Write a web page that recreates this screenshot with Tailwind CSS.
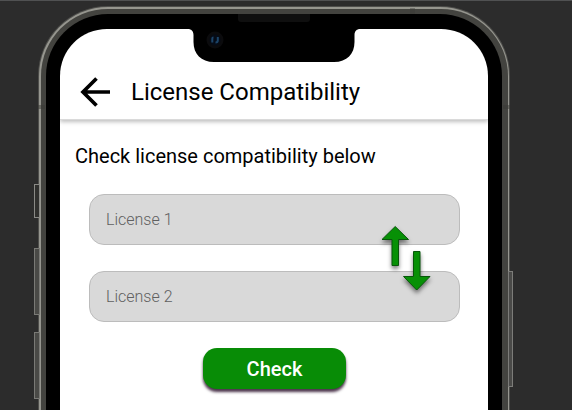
<!DOCTYPE html>
<html lang="en">
<head>
<meta charset="utf-8">
<title>License Compatibility</title>
<script src="https://cdn.jsdelivr.net/npm/@tailwindcss/browser@4"></script>
</head>
<body class="w-[572px] h-[410px] overflow-hidden bg-[#2c2c2c]">
<div class="relative w-[572px] h-[410px] overflow-hidden border-t border-[#505152] font-[Roboto,sans-serif] text-black">
  <!-- side buttons -->
  <div class="absolute left-[34px] top-[183px] w-[6px] h-[34px] border border-[#8a8a86] bg-[#30302e]"></div>
  <div class="absolute left-[34px] top-[247px] w-[6px] h-[67px] border border-[#7a7a76] bg-[#4a4a47]"></div>
  <div class="absolute left-[34px] top-[331px] w-[6px] h-[67px] border border-[#7a7a76] bg-[#4a4a47]"></div>
  <div class="absolute left-[508px] top-[270px] w-[5px] h-[116px] border border-[#7c7c79] bg-[#4a4a48]"></div>

  <!-- phone body -->
  <div class="ml-[38px] mt-[5px] w-[472px] h-[520px] rounded-[70px] bg-[#4e4e4b] p-px">
    <div class="h-full rounded-[69px] bg-[#96968f] p-[1.5px]">
      <div class="h-full rounded-[67px] bg-[#43433f] p-[5.5px]">
        <div class="h-full rounded-[62px] bg-black pt-[15px] px-[14px]">
          <!-- screen -->
          <main class="h-full w-[428px] rounded-t-[47px] bg-white overflow-hidden">
            <header class="flex h-[91px] items-end border-b border-[#dadada] pl-[20px] pb-[11px] shadow-[0_2px_4px_rgba(0,0,0,0.25)]">
              <svg class="w-[31px] h-[30px] mb-px shrink-0" viewBox="0 0 31 30" fill="none" stroke="#000" stroke-width="3.7"><path d="M30 15H3M16.500 1.500L3 15L16.500 28.500"/></svg>
              <h1 class="ml-[20px] text-[24px] leading-[32px] whitespace-nowrap">License Compatibility</h1>
            </header>
            <p class="pl-[15px] mt-[22px] text-[20px] leading-[28px] whitespace-nowrap">Check license compatibility below</p>
            <div class="mt-[24px] ml-[29px] w-[371px] flex flex-col gap-[26px] text-[16px] leading-[24px] font-light text-[#606060]">
              <div class="h-[51px] rounded-[15px] border border-[#bcbcbc] bg-[#d9d9d9] pl-[16px] pt-[13px]">License 1</div>
              <div class="h-[51px] rounded-[15px] border border-[#bcbcbc] bg-[#d9d9d9] pl-[16px] pt-[13px]">License 2</div>
            </div>
            <button class="block mt-[26px] ml-[143px] w-[143px] h-[41px] rounded-[14px] bg-[#088c06] text-white text-[20px] font-medium shadow-[0_3px_3px_rgba(30,0,30,0.8)]">Check</button>
          </main>
        </div>
      </div>
    </div>
  </div>

  <!-- antenna bands -->
  <div class="absolute left-[38px] top-[104px] w-[7px] h-[4px] bg-[#3a3a36]/50"></div>
  <div class="absolute left-[503px] top-[104px] w-[7px] h-[4px] bg-[#3a3a36]/50"></div>
  <div class="absolute left-[410px] top-[7px] w-[5px] h-[6px] bg-[#3a3a36]/40"></div>

  <!-- notch, speaker and camera -->
  <svg class="absolute left-[186px] top-[12px] w-[176px] h-[52px]" viewBox="186 13 176 52">
    <path fill="#000" d="M188 20H360V29C357 29 354.500 31 354.500 35V42C354.500 54 347 62 334 62H214C201 62 193.500 54 193.500 42V35C193.500 31 191 29 188 29Z"/>
    <path fill="#0f0f0f" d="M238 14H310V19Q310 22 307 22H241Q238 22 238 19Z"/>
    <circle cx="215" cy="40" r="8.500" fill="#0b0b0d"/>
    <circle cx="215" cy="40" r="5.500" fill="#050b16"/>
    <path d="M212.300 42.500V38.500Q212.300 37.500 213.500 37.500M217.800 37V40.500Q217.800 42.500 215.500 42.500" stroke="#1c4468" stroke-width="2" fill="none"/>
  </svg>

  <!-- swap arrows -->
  <svg class="absolute left-[374px] top-[219px] w-[66px] h-[80px] drop-shadow-[0_3px_2px_rgba(0,0,0,0.5)]" viewBox="374 220 66 80" fill="#079006" stroke="#07570a" stroke-width="1">
    <path d="M395.200 226.500L408.500 239.500H398.500V265.500H392V239.500H382Z"/>
    <path d="M413.500 251.500H420V276.500H430L416.700 290L403.500 276.500H413.500Z"/>
  </svg>
</div>
</body>
</html>
